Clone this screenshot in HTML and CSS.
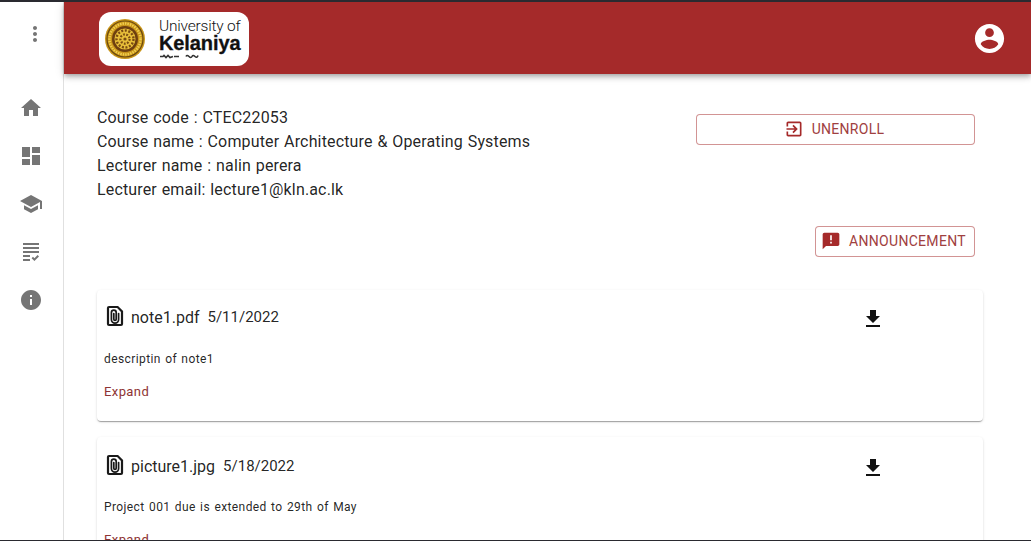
FILE: index.html
```html
<!DOCTYPE html>
<html lang="en">
<head>
  <meta charset="UTF-8" />
  <meta name="viewport" content="width=device-width, initial-scale=1.0" />
  <title>Course</title>
  <link rel="stylesheet" href="styles.css">
</head>
<body>
  <div class="page">
    <aside class="sidebar">
      <div class="menu-btn">
        <svg class="icon" viewBox="0 0 24 24"><path d="M12 8c1.1 0 2-.9 2-2s-.9-2-2-2-2 .9-2 2 .9 2 2 2zm0 2c-1.1 0-2 .9-2 2s.9 2 2 2 2-.9 2-2-.9-2-2-2zm0 6c-1.1 0-2 .9-2 2s.9 2 2 2 2-.9 2-2-.9-2-2-2z"/></svg>
      </div>
      <nav class="side-nav">
        <a class="side-item"><svg class="icon" viewBox="0 0 24 24"><path d="M10 20v-6h4v6h5v-8h3L12 3 2 12h3v8z"/></svg></a>
        <a class="side-item"><svg class="icon" viewBox="0 0 24 24"><path d="M3 13h8V3H3v10zm0 8h8v-6H3v6zm10 0h8V11h-8v10zm0-18v6h8V3h-8z"/></svg></a>
        <a class="side-item"><svg class="icon" viewBox="0 0 24 24"><path d="M5 13.18v4L12 21l7-3.82v-4L12 17l-7-3.82zM12 3 1 9l11 6 9-4.91V17h2V9L12 3z"/></svg></a>
        <a class="side-item"><svg class="icon" viewBox="0 0 24 24"><path d="M4 7h16v2H4V7zm0 6h16v-2H4v2zm0 4h7v-2H4v2zm0 4h7v-2H4v2zm11.41-2.83L14 16.76l-1.41 1.41L15.41 21 20 16.41 18.59 15l-3.18 3.17zM4 3v2h16V3H4z"/></svg></a>
        <a class="side-item"><svg class="icon" viewBox="0 0 24 24"><path d="M12 2C6.48 2 2 6.48 2 12s4.48 10 10 10 10-4.48 10-10S17.52 2 12 2zm1 15h-2v-6h2v6zm0-8h-2V7h2v2z"/></svg></a>
      </nav>
    </aside>

    <div class="right">
      <header class="topbar">
        <div class="logo">
          <svg class="seal" viewBox="0 0 40 40">
            <circle cx="20" cy="20" r="20" fill="#c9951a"/>
            <circle cx="20" cy="20" r="18" fill="none" stroke="#6b4a10" stroke-width="1.2"/>
            <circle cx="20" cy="20" r="15.5" fill="none" stroke="#f0cf50" stroke-width="2.5" stroke-dasharray="1.5 1"/>
            <circle cx="20" cy="20" r="13" fill="#6e3f10"/>
            <circle cx="20" cy="20" r="10.5" fill="#e8bf3a"/>
            <circle cx="20" cy="20" r="8.5" fill="none" stroke="#7a4c12" stroke-width="2.4" stroke-dasharray="2 1.6"/>
            <circle cx="20" cy="20" r="4.6" fill="none" stroke="#7a4c12" stroke-width="2.2" stroke-dasharray="1.8 1.4"/>
            <circle cx="20" cy="20" r="1.6" fill="#7a4c12"/>
          </svg>
          <div class="logo-text">
            <span class="logo-top">University of</span>
            <span class="logo-name">Kelaniya</span>
            <svg class="logo-tag" viewBox="0 0 44 6"><path d="M1 3.5h3l1-1 2 2 2-2 2 2 3-1M15 3.5h5M27 3.5q1-2 3 0t3 0 3 0 3-1" fill="none" stroke="#333" stroke-width="1.6"/></svg>
          </div>
        </div>
        <svg class="account" viewBox="0 0 24 24"><path d="M12 2C6.48 2 2 6.48 2 12s4.48 10 10 10 10-4.48 10-10S17.52 2 12 2zm0 3c1.66 0 3 1.34 3 3s-1.34 3-3 3-3-1.34-3-3 1.34-3 3-3zm0 14.2c-2.5 0-4.71-1.28-6-3.22.03-1.99 4-3.08 6-3.08 1.99 0 5.97 1.09 6 3.08-1.29 1.94-3.5 3.22-6 3.22z"/></svg>
      </header>

      <main class="content">
        <section class="course-row">
          <div class="course-info">
            <div>Course code : CTEC22053</div>
            <div>Course name : Computer Architecture &amp; Operating Systems</div>
            <div>Lecturer name : nalin perera</div>
            <div>Lecturer email: lecture1@kln.ac.lk</div>
          </div>
          <button class="btn btn-wide">
            <svg class="btn-icon" viewBox="0 0 24 24"><path d="M10.09 15.59 11.5 17l5-5-5-5-1.41 1.41L12.67 11H3v2h9.67l-2.58 2.59zM19 3H5c-1.11 0-2 .9-2 2v4h2V5h14v14H5v-4H3v4c0 1.1.89 2 2 2h14c1.1 0 2-.9 2-2V5c0-1.1-.9-2-2-2z"/></svg>
            UNENROLL
          </button>
        </section>

        <div class="announce-row">
          <button class="btn">
            <svg class="btn-icon" viewBox="0 0 24 24"><path d="M20 2H4c-1.1 0-1.99.9-1.99 2L2 22l4-4h14c1.1 0 2-.9 2-2V4c0-1.1-.9-2-2-2zm-7 9h-2V5h2v6zm0 4h-2v-2h2v2z"/></svg>
            ANNOUNCEMENT
          </button>
        </div>

        <article class="card">
          <div class="card-head">
            <svg class="file-icon" viewBox="0 0 24 24">
              <path class="file-outline" d="M14.6 3H6a1 1 0 0 0-1 1v16a1 1 0 0 0 1 1h12a1 1 0 0 0 1-1V7.4z"/>
              <path class="file-clip" d="M15.6 9.5v6a3.6 3.6 0 0 1-7.2 0V8.6a2.4 2.4 0 0 1 4.8 0v6.6a1.2 1.2 0 0 1-2.4 0V9.5"/>
            </svg>
            <span class="file-name">note1.pdf</span>
            <span class="file-date">5/11/2022</span>
            <svg class="download" viewBox="0 0 24 24"><path d="M19 9h-4V3H9v6H5l7 7 7-7zM5 18v2h14v-2H5z"/></svg>
          </div>
          <p class="card-desc">descriptin of note1</p>
          <a class="expand">Expand</a>
        </article>

        <article class="card">
          <div class="card-head">
            <svg class="file-icon" viewBox="0 0 24 24">
              <path class="file-outline" d="M14.6 3H6a1 1 0 0 0-1 1v16a1 1 0 0 0 1 1h12a1 1 0 0 0 1-1V7.4z"/>
              <path class="file-clip" d="M15.6 9.5v6a3.6 3.6 0 0 1-7.2 0V8.6a2.4 2.4 0 0 1 4.8 0v6.6a1.2 1.2 0 0 1-2.4 0V9.5"/>
            </svg>
            <span class="file-name">picture1.jpg</span>
            <span class="file-date">5/18/2022</span>
            <svg class="download" viewBox="0 0 24 24"><path d="M19 9h-4V3H9v6H5l7 7 7-7zM5 18v2h14v-2H5z"/></svg>
          </div>
          <p class="card-desc">Project 001 due is extended to 29th of May</p>
          <a class="expand">Expand</a>
        </article>
      </main>
    </div>
  </div>
</body>
</html>
```

FILE: styles.css
```css
html, body {
  height: 100%;
}

body {
  margin: 0;
  font-family: Roboto, sans-serif;
  color: rgba(0, 0, 0, 0.87);
  background: #fff;
  overflow: hidden;
}

.page {
  display: flex;
  height: 541px;
  box-sizing: border-box;
  border-top: 2px solid #2a2a30;
  border-bottom: 1px solid #2a2a30;
  overflow: hidden;
}

.sidebar {
  width: 63px;
  flex-shrink: 0;
  border-right: 1px solid #e0e0e0;
}

.icon {
  width: 24px;
  height: 24px;
  display: block;
  fill: #757575;
}

.menu-btn {
  display: flex;
  justify-content: flex-end;
  padding: 20px 16px 0 0;
  height: 42px;
}

.side-nav {
  margin-top: 20px;
}

.side-item {
  display: flex;
  align-items: center;
  height: 48px;
  padding-left: 19px;
}

.right {
  flex: 1;
  min-width: 0;
}

.topbar {
  height: 72px;
  background: #a52a2a;
  display: flex;
  align-items: center;
  justify-content: space-between;
  padding: 0 24px 0 35px;
  box-shadow: 0 2px 4px -1px rgba(0, 0, 0, 0.2), 0 4px 5px 0 rgba(0, 0, 0, 0.14), 0 1px 10px 0 rgba(0, 0, 0, 0.12);
  position: relative;
}

.logo {
  width: 150px;
  height: 54px;
  margin-top: 2px;
  background: #fff;
  border-radius: 12px;
  display: flex;
  align-items: center;
  gap: 14px;
  padding-left: 6px;
  box-sizing: border-box;
}

.seal {
  width: 40px;
  height: 40px;
  flex-shrink: 0;
}

.logo-text {
  display: flex;
  flex-direction: column;
  color: #111;
  font-family: "Liberation Sans", sans-serif;
}

.logo-top {
  font-family: Roboto, sans-serif;
  font-size: 15.5px;
  font-weight: 300;
  line-height: 15px;
  letter-spacing: -0.2px;
}

.logo-name {
  font-size: 20px;
  line-height: 18px;
  font-weight: 700;
  letter-spacing: -0.1px;
  -webkit-text-stroke: 0.3px #111;
}

.logo-tag {
  width: 44px;
  height: 6px;
  margin-top: 1px;
}

.account {
  width: 35px;
  height: 35px;
  fill: #fff;
  margin-top: 1px;
}

.content {
  padding: 32px 48px 0 33px;
}

.course-row {
  display: flex;
  justify-content: space-between;
  align-items: flex-start;
  padding-right: 8px;
}

.course-info {
  font-size: 16px;
  line-height: 24px;
  letter-spacing: 0.15px;
  word-spacing: 0.7px;
}

.btn {
  display: flex;
  align-items: center;
  justify-content: center;
  gap: 8px;
  height: 31px;
  width: 160px;
  padding: 0 3px 2px 0;
  background: #fff;
  color: #a04040;
  border: 1px solid rgba(165, 42, 42, 0.5);
  border-radius: 4px;
  font-family: Roboto, sans-serif;
  font-size: 14px;
  letter-spacing: 0.3px;
}

.btn-wide {
  width: 279px;
  margin-top: 8px;
}

.btn-icon {
  width: 20px;
  height: 20px;
  fill: #a52a2a;
}

.announce-row {
  display: flex;
  justify-content: flex-end;
  padding-right: 8px;
  margin-top: 24px;
}

.card {
  margin-top: 33px;
  height: 131px;
  box-sizing: border-box;
  padding: 15px 7px 0 6px;
  border-radius: 4px;
  background: #fff;
  box-shadow: 0 2px 1px -1px rgba(0, 0, 0, 0.2), 0 1px 1px 0 rgba(0, 0, 0, 0.14), 0 1px 3px 0 rgba(0, 0, 0, 0.12);
}

.card + .card {
  margin-top: 16px;
  padding-top: 17px;
}

.card-head {
  display: flex;
  align-items: center;
  height: 24px;
}

.file-icon {
  width: 24px;
  height: 24px;
  fill: none;
  margin-top: -3px;
}

.file-outline {
  stroke: #1a1a1a;
  stroke-width: 2.2;
}

.file-clip {
  stroke: #1a1a1a;
  stroke-width: 1.7;
  stroke-linecap: round;
}

.file-name {
  margin-left: 4px;
  font-size: 16px;
}

.file-date {
  margin-left: 8px;
  font-size: 15px;
  flex: 1;
}

.download {
  width: 24px;
  height: 24px;
  fill: #111;
  margin: 3px 91px 0 0;
}

.card-desc {
  margin: 20px 0 0 1px;
  font-size: 12px;
  line-height: 20px;
  letter-spacing: 0.4px;
  word-spacing: 1px;
}

.card + .card .card-desc {
  margin-top: 19px;
}

.expand {
  display: block;
  margin: 13px 0 0 1px;
  font-size: 13px;
  line-height: 20px;
  letter-spacing: 0.4px;
  color: #8e3434;
}
```
